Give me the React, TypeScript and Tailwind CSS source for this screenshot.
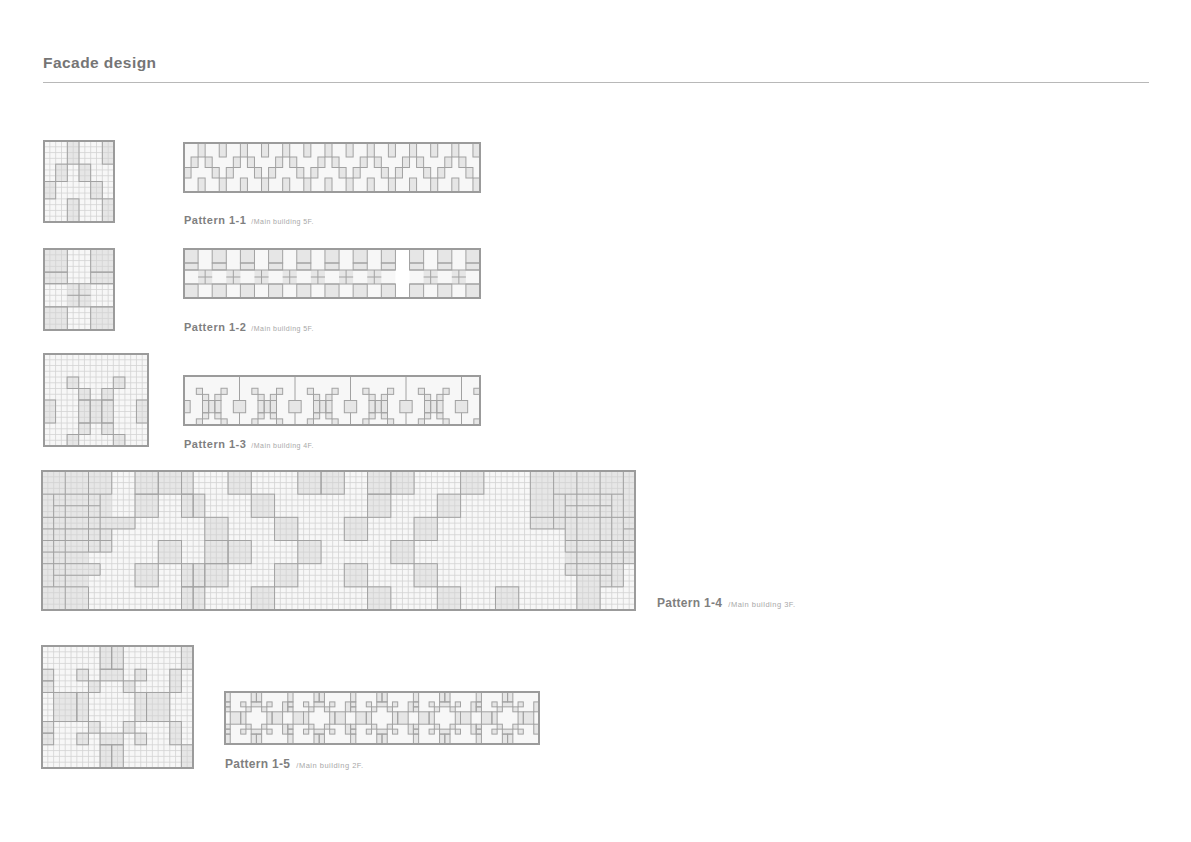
type R = [number, number, number, number];
type L = [number, number, number, number];

const FILL = '#e6e6e6';
const STROKE = '#a2a2a2';
const GRID = '#d3d3d3';

function shift(items: R[], period: number, from: number, to: number): R[] {
  const out: R[] = [];
  for (let i = from; i < to; i++) {
    items.forEach(([x, y, w, h]) => out.push([x + i * period, y, w, h]));
  }
  return out;
}

function Pattern({
  cols,
  rows,
  width,
  height,
  blocks = [],
  fills = [],
  whites = [],
  lines = [],
  grid = false,
}: {
  cols: number;
  rows: number;
  width: number;
  height: number;
  blocks?: R[];
  fills?: R[];
  whites?: R[];
  lines?: L[];
  grid?: boolean;
}) {
  const cw = (width - 2) / cols;
  const ch = (height - 2) / rows;
  const gridLines = [];
  if (grid) {
    for (let i = 1; i < cols; i++) {
      gridLines.push(<line key={`c${i}`} x1={i * cw} x2={i * cw} y1={0} y2={rows * ch} stroke={GRID} strokeWidth={0.8} />);
    }
    for (let i = 1; i < rows; i++) {
      gridLines.push(<line key={`r${i}`} y1={i * ch} y2={i * ch} x1={0} x2={cols * cw} stroke={GRID} strokeWidth={0.8} />);
    }
  }
  return (
    <svg width={width} height={height} className="block shrink-0">
      <rect x={0} y={0} width={width} height={height} fill="#f7f7f7" />
      <g transform="translate(1 1)">
        {whites.map(([x, y, w, h], i) => (
          <rect key={i} x={x * cw} y={y * ch} width={w * cw} height={h * ch} fill="#ffffff" />
        ))}
        {[...fills, ...blocks].map(([x, y, w, h], i) => (
          <rect key={i} x={x * cw} y={y * ch} width={w * cw} height={h * ch} fill={FILL} />
        ))}
        {gridLines}
        {blocks.map(([x, y, w, h], i) => (
          <rect key={i} x={x * cw} y={y * ch} width={w * cw} height={h * ch} fill="none" stroke={STROKE} strokeWidth={1} />
        ))}
        {lines.map(([x1, y1, x2, y2], i) => (
          <line key={i} x1={x1 * cw} y1={y1 * ch} x2={x2 * cw} y2={y2 * ch} stroke={STROKE} strokeWidth={1} />
        ))}
      </g>
      <rect x={1} y={1} width={width - 2} height={height - 2} fill="none" stroke="#9b9b9b" strokeWidth={2} />
    </svg>
  );
}

function Caption({ name, sub, className = '' }: { name: string; sub: string; className?: string }) {
  return (
    <div className={`ml-[1px] flex items-baseline gap-[5px] whitespace-nowrap ${className}`}>
      <span className="text-[11px] font-bold tracking-[0.5px] text-[#7f7f7f]">{name}</span>
      <span className="text-[7px] tracking-[0.45px] text-[#a8a8a8]">{sub}</span>
    </div>
  );
}

function BigCaption({ name, sub, className = '' }: { name: string; sub: string; className?: string }) {
  return (
    <div className={`flex items-baseline gap-[6px] whitespace-nowrap ${className}`}>
      <span className="text-[12px] font-bold tracking-[0.3px] text-[#7f7f7f]">{name}</span>
      <span className="text-[7.5px] tracking-[0.5px] text-[#a8a8a8]">{sub}</span>
    </div>
  );
}

const p1: R[] = [
  [4, 0, 2, 4], [10, 0, 2, 4], [2, 4, 2, 3], [6, 4, 2, 3],
  [0, 7, 2, 3], [8, 7, 2, 3], [4, 10, 2, 4], [10, 10, 2, 4],
];

const p2: R[] = [[0, 0, 4, 4], [0, 4, 4, 2], [0, 10, 4, 4]];
const p2Square: R[] = [...p2, ...shift(p2, 8, 1, 2)];
const p2Strip: R[] = shift(p2, 8, 0, 11);
const crosses = [4, 12, 20, 28, 36, 44, 52, 68, 76];

const p3: R[] = [
  [4, 4, 2, 2], [12, 4, 2, 2], [6, 6, 2, 2], [10, 6, 2, 2],
  [6, 8, 2, 4], [8, 8, 2, 4], [10, 8, 2, 4], [6, 12, 2, 2],
  [10, 12, 2, 2], [4, 14, 2, 2], [12, 14, 2, 2],
];

const p4: R[] = [
  [16, 0, 4, 4], [20, 0, 4, 4], [24, 0, 2, 4], [32, 0, 4, 4], [44, 0, 4, 4], [48, 0, 4, 4],
  [16, 4, 4, 4], [24, 4, 2, 4], [26, 4, 2, 4], [36, 4, 4, 4], [28, 8, 4, 4], [40, 8, 4, 4],
  [20, 12, 4, 4], [28, 12, 4, 4], [32, 12, 4, 4], [44, 12, 4, 4], [16, 16, 4, 4],
  [24, 16, 2, 4], [26, 16, 2, 4], [28, 16, 4, 4], [40, 16, 4, 4], [24, 20, 2, 4],
  [26, 20, 2, 4], [36, 20, 4, 4], [56, 0, 4, 4], [60, 0, 4, 4], [72, 0, 4, 4],
  [56, 4, 4, 4], [68, 4, 4, 4], [52, 8, 4, 4], [64, 8, 4, 4], [60, 12, 4, 4],
  [52, 16, 4, 4], [64, 16, 4, 4], [56, 20, 4, 4], [68, 20, 4, 4], [78, 20, 4, 4],
];

const p4Fills: R[] = [
  [0, 0, 12, 14], [12, 8, 4, 2], [0, 14, 8, 10], [8, 16, 2, 2],
  [84, 0, 18, 10], [90, 10, 12, 6], [90, 16, 8, 2], [92, 18, 4, 6], [96, 16, 4, 4],
];

const p4Lines: L[] = [
  // left cluster
  [0, 4, 12, 4], [2, 6, 10, 6], [0, 8, 16, 8], [0, 10, 16, 10], [0, 12, 12, 12],
  [0, 14, 12, 14], [0, 16, 10, 16], [2, 18, 10, 18], [0, 20, 8, 20],
  [2, 4, 2, 20], [4, 0, 4, 24], [8, 0, 8, 14], [8, 20, 8, 24], [10, 4, 10, 14],
  [10, 16, 10, 18], [12, 0, 12, 4], [12, 10, 12, 14], [16, 8, 16, 10],
  // right cluster
  [84, 0, 84, 10], [88, 0, 88, 10], [90, 4, 90, 14], [90, 16, 90, 18], [92, 0, 92, 24],
  [96, 0, 96, 24], [98, 4, 98, 20], [100, 0, 100, 20],
  [88, 4, 100, 4], [90, 6, 98, 6], [84, 8, 102, 8], [84, 10, 90, 10], [100, 10, 102, 10],
  [90, 12, 102, 12], [90, 14, 102, 14], [90, 16, 102, 16], [90, 18, 98, 18], [96, 20, 100, 20],
];

const p5: R[] = [
  [10, 0, 2, 4], [12, 0, 2, 4], [24, 0, 2, 4], [0, 4, 2, 2], [0, 6, 2, 2], [6, 4, 2, 2],
  [10, 4, 4, 2], [16, 4, 2, 2], [22, 4, 2, 4], [8, 6, 2, 2], [14, 6, 2, 2], [2, 8, 4, 5],
  [6, 8, 2, 5], [16, 8, 2, 5], [18, 8, 4, 5], [0, 13, 2, 2], [0, 15, 2, 2], [8, 13, 2, 2],
  [14, 13, 2, 2], [6, 15, 2, 2], [16, 15, 2, 2], [10, 15, 4, 2], [22, 13, 2, 4],
  [10, 17, 2, 4], [12, 17, 2, 4], [24, 17, 2, 4],
];

export default function App() {
  return (
    <div className="h-[842px] w-[1191px] overflow-hidden bg-white pl-[41px] font-['Liberation_Sans',sans-serif]">
      <div className="ml-[2px] mr-[42px] border-b border-[#b8b8b8] pt-[54px] pb-[10px]">
        <h1 className="text-[15.5px] leading-[18px] font-bold tracking-[0.45px] text-[#757575]">Facade design</h1>
      </div>

      <div className="mt-[57px] ml-[2px] flex h-[83px] gap-[68px]">
        <Pattern cols={12} rows={14} width={72} height={83} blocks={p1} grid />
        <div className="mt-[2px]">
          <Pattern cols={84} rows={14} width={298} height={51} blocks={shift(p1, 12, 0, 7)} />
          <Caption name="Pattern 1-1" sub="/Main building 5F." className="mt-[19px]" />
        </div>
      </div>

      <div className="mt-[25px] ml-[2px] flex h-[83px] gap-[68px]">
        <Pattern
          cols={12}
          rows={14}
          width={72}
          height={83}
          blocks={p2Square}
          fills={[[4, 6, 4, 4]]}
          lines={[[0, 6, 12, 6], [0, 10, 12, 10], [6, 6, 6, 10], [4, 8, 8, 8]]}
          grid
        />
        <div>
          <Pattern
            cols={84}
            rows={14}
            width={298}
            height={51}
            blocks={p2Strip}
            fills={crosses.map((x): R => [x, 6, 4, 4])}
            whites={[[60, 0, 4, 14]]}
            lines={[
              [0, 6, 60, 6],
              [64, 6, 84, 6],
              [0, 10, 60, 10],
              [64, 10, 84, 10],
              ...crosses.map((x): L => [x + 2, 6, x + 2, 10]),
              ...crosses.map((x): L => [x, 8, x + 4, 8]),
            ]}
          />
          <Caption name="Pattern 1-2" sub="/Main building 5F." className="mt-[20px]" />
        </div>
      </div>

      <div className="mt-[22px] ml-[2px] flex h-[94px] gap-[34px]">
        <Pattern cols={18} rows={16} width={106} height={94} blocks={[...p3, [0, 8, 2, 4], [16, 8, 2, 4]]} grid />
        <div className="mt-[22px]">
          <Pattern
            cols={96}
            rows={16}
            width={298}
            height={51}
            blocks={[...shift(p3, 18, 0, 6), [0, 8, 2, 4], ...shift([[16, 8, 4, 4]], 18, 0, 6)]}
            lines={[18, 36, 54, 72, 90].flatMap((x): L[] => [[x, 0, x, 8], [x, 12, x, 16]])}
          />
          <Caption name="Pattern 1-3" sub="/Main building 4F." className="mt-[10px]" />
        </div>
      </div>

      <div className="mt-[23px] flex items-end gap-[21px]">
        <Pattern cols={102} rows={24} width={595} height={141} blocks={p4} fills={p4Fills} lines={p4Lines} grid />
        <BigCaption name="Pattern 1-4" sub="/Main building 3F." className="mb-[-1px]" />
      </div>

      <div className="mt-[34px] flex h-[124px] gap-[30px]">
        <Pattern cols={26} rows={21} width={153} height={124} blocks={p5} grid />
        <div className="mt-[46px]">
          <Pattern cols={120} rows={21} width={316} height={54} blocks={shift(p5, 24, -1, 6)} />
          <BigCaption name="Pattern 1-5" sub="/Main building 2F." className="mt-[10px] ml-[1px]" />
        </div>
      </div>
    </div>
  );
}
